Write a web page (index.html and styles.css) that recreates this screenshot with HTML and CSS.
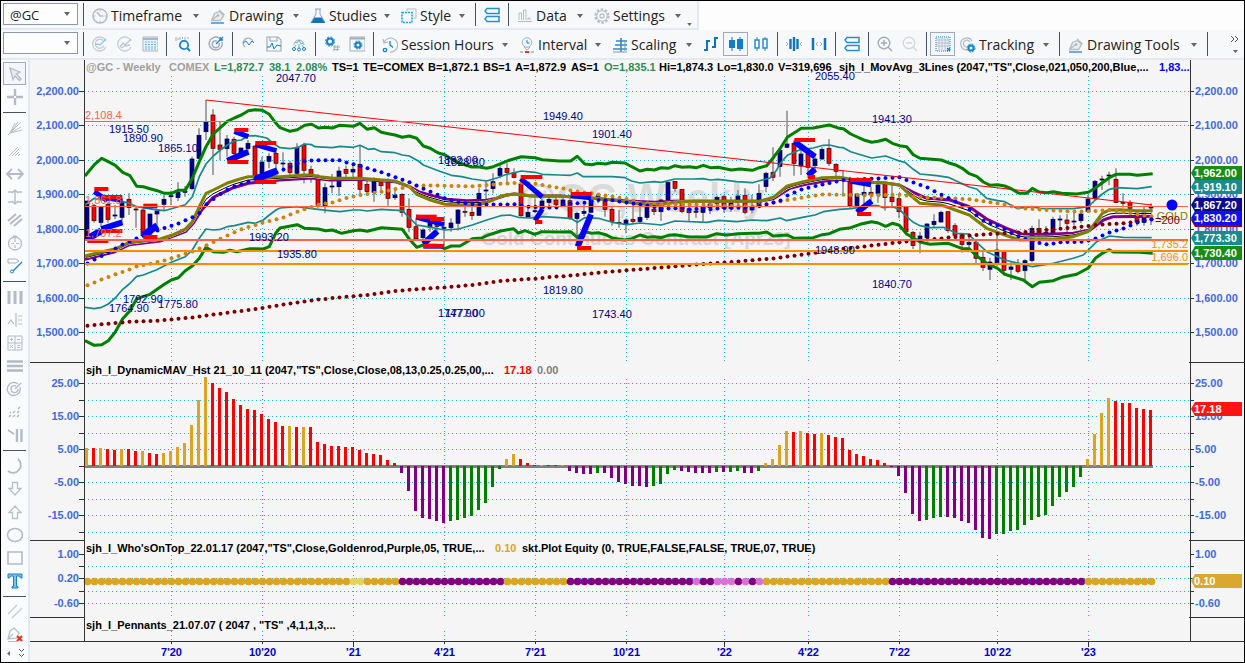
FILE: index.html
```html
<!DOCTYPE html>
<html lang="en">
<head>
<meta charset="utf-8">
<title>@GC - Weekly</title>
<link rel="stylesheet" href="styles.css">
</head>
<body>
<svg class="defs" aria-hidden="true">
  <symbol id="caret" viewBox="0 0 6 4"><path d="M0 0h6L3 4z" fill="#666"/></symbol>
  <symbol id="clock" viewBox="0 0 16 16"><g fill="none" stroke="#b3bcc8"><circle cx="8" cy="8" r="7" stroke-width="1.6"/><path d="M5 4l3 4h3.500" stroke-width="1.500"/><path d="M8 1.500v2M8 12.500v2M1.500 8h2M12.500 8h2"/></g></symbol>
  <symbol id="pen" viewBox="0 0 16 16"><path d="M2 12l2-6 5-2 4 4-2 4z" fill="#e9edf0"/><path d="M1.500 12.500l3-7 5-2 4 4-3 5zM2 12l5-4M9 2l5.500 5" fill="none" stroke="#b3bec6" stroke-width="1.300"/><circle cx="8" cy="7.500" r="1.300" fill="#a9b6bf"/><path d="M1 15h13" stroke="#1c86cf" stroke-width="1.300"/></symbol>
  <symbol id="flask" viewBox="0 0 16 16"><path d="M5 1h6M6 1v5L1 14.500h14L10 6V1" fill="none" stroke="#8ba2b4"/><path d="M4.500 9.500h7l3.500 5.500H1z" fill="#0f74bd"/></symbol>
  <symbol id="style" viewBox="0 0 16 16"><path d="M6 3V1h9v9h-2" fill="none" stroke="#b3bcc8"/><path d="M1 4.500h10v10H1z" fill="none" stroke="#20a3e8" stroke-width="1.600" stroke-dasharray="2 1"/></symbol>
  <symbol id="stack" viewBox="0 0 16 16"><path d="M3 1.500h12v5H3L1 4zM3 9.500h12v5H3L1 12z" fill="#fff" stroke="#2a8ccb" stroke-width="1.500"/></symbol>
  <symbol id="data" viewBox="0 0 16 16"><path d="M2 12V5h2.500v7M6.500 12V2H9v10M11 12v-2h2v2M1 13.500h14" fill="none" stroke="#b3bec6"/></symbol>
  <symbol id="gear" viewBox="0 0 16 16"><circle cx="8" cy="8" r="6.500" fill="none" stroke="#b8c0c8" stroke-width="2.400" stroke-dasharray="2.500 1.580"/><circle cx="8" cy="8" r="5.200" fill="none" stroke="#b8c0c8"/><circle cx="8" cy="8" r="2" fill="none" stroke="#b8c0c8" stroke-width="1.300"/></symbol>
  <symbol id="scan1" viewBox="0 0 16 16"><path d="M14 5a7 7 0 1 0 0 6M11 4.500a4.500 4.500 0 1 0 1 5" fill="none" stroke="#c5cdd8" stroke-width="1.300"/><path d="M3 9l3-1 2 1 6-6" fill="none" stroke="#8fc4e6" stroke-width="1.300"/></symbol>
  <symbol id="scan2" viewBox="0 0 16 16"><path d="M14 5a7 7 0 1 0 0 6" fill="none" stroke="#c5cdd8" stroke-width="1.300"/><path d="M3 11l3-4 2 2 6-6M4 12l4-2 5-1" fill="none" stroke="#b8c5d0" stroke-width="1.300"/></symbol>
  <symbol id="table" viewBox="0 0 16 16"><path d="M1 1h15v14H1z" fill="#e8f2fa" stroke="#aab6c6"/><path d="M1 3h15" stroke="#aab6c6" stroke-width="2"/><path d="M3 6h11M3 8.500h11M3 11h11M3 13h11" stroke="#69b0e0" stroke-dasharray="2 1"/></symbol>
  <symbol id="find" viewBox="0 0 16 16"><path d="M1 1v4M3 2v2M5 1v3M7.500 1v2M10 1v3M13 1v2" stroke="#a3aebb"/><circle cx="9" cy="9" r="4.200" fill="none" stroke="#1583c9" stroke-width="1.700"/><path d="M12 12l3 3" stroke="#1583c9" stroke-width="2"/></symbol>
  <symbol id="target" viewBox="0 0 16 16"><path d="M14 6a6.500 6.500 0 1 1-3-4M11 7a3.500 3.500 0 1 1-2-2" fill="none" stroke="#a3adb9" stroke-width="1.500"/><path d="M8 8l7-7M12 1v3h3" fill="none" stroke="#1583c9" stroke-width="1.300"/></symbol>
  <symbol id="pulse" viewBox="0 0 16 16"><path d="M4 11a5 5 0 1 1 8-5" fill="none" stroke="#a3adb9" stroke-width="1.300"/><path d="M2 7l3-2 3 4 3-4 2 2" fill="none" stroke="#1583c9"/></symbol>
  <symbol id="pulseDisk" viewBox="0 0 16 16"><path d="M1 15V1h11l3 3v11zM4 1v4h7V1" fill="none" stroke="#a3adb9" stroke-width="1.200"/><path d="M1 11h3l2-4 2 6 3-4 4 1" fill="none" stroke="#1583c9"/></symbol>
  <symbol id="pulseNet" viewBox="0 0 16 16"><path d="M3 9a5 5 0 1 1 10 0" fill="none" stroke="#a3adb9"/><path d="M4 6l2 1 2-3 2 4 2-1M8 8v4M5 9l-2 3M11 9l2 3" fill="none" stroke="#5baedd"/><g fill="none" stroke="#1583c9"><circle cx="3" cy="13" r="1.500"/><circle cx="8" cy="13.500" r="1.500"/><circle cx="13" cy="13" r="1.500"/></g></symbol>
  <symbol id="gearHash" viewBox="0 0 16 16"><circle cx="6" cy="5.500" r="3" fill="none" stroke="#1583c9" stroke-width="2"/><circle cx="6" cy="5.500" r="4.600" fill="none" stroke="#1583c9" stroke-dasharray="2 1.600"/><path d="M11 9l-1 6M14 9l-1 6M9 11h7M9 13.500h6" stroke="#a3adb9"/></symbol>
  <symbol id="gearWin" viewBox="0 0 16 16"><path d="M1 1h15v14H1z" fill="none" stroke="#a3adb9"/><path d="M1 2.500h15" stroke="#a3adb9" stroke-width="2"/><circle cx="9" cy="9" r="2.500" fill="none" stroke="#1583c9" stroke-width="2"/><circle cx="9" cy="9" r="4" fill="none" stroke="#1583c9" stroke-dasharray="2 1.140"/></symbol>
  <symbol id="session" viewBox="0 0 16 16"><path d="M2 6a7 7 0 1 1 6 9M1 2l1 4 4-1" fill="none" stroke="#b0b9c4" stroke-width="1.200"/><path d="M8 4v4l3 2.500" fill="none" stroke="#1583c9" stroke-width="1.300"/><circle cx="3" cy="13" r="1.700" fill="none" stroke="#1583c9" stroke-width="1.300"/></symbol>
  <symbol id="interval" viewBox="0 0 16 16"><circle cx="8" cy="5.500" r="4.800" fill="#eef6fb" stroke="#a3b0ba"/><path d="M8 3v3h2.500" fill="none" stroke="#1583c9"/><path d="M5 10l3 3 3-3" fill="none" stroke="#a3b0ba"/><path d="M1 15h3M12 15h3" stroke="#a3b0ba" stroke-width="1.500"/><path d="M6 15h4" stroke="#ee3322" stroke-width="2"/></symbol>
  <symbol id="scaling" viewBox="0 0 16 16"><path d="M9 1v14" stroke="#5d7384" stroke-width="1.500"/><path d="M4 4h11M3 8h12M1 12h14" stroke="#2a8ccb" stroke-width="1.300"/><path d="M13 3v11M1 15h14" stroke="#8796a3"/></symbol>
  <symbol id="ohlc" viewBox="0 0 16 16"><path d="M4 4v11M1 14h3M4 5h3M12 1v11M9 11h3M12 2h3" stroke="#0f74bd" stroke-width="2"/></symbol>
  <symbol id="candles" viewBox="0 0 16 16"><path d="M4 1v14M12 1v14" stroke="#0f74bd"/><path d="M1 4h6v8H1zM9 3h6v10H9z" fill="#0f7ccb"/></symbol>
  <symbol id="hollow" viewBox="0 0 16 16"><path d="M4 1v14M12 1v14" stroke="#2a8ccb"/><path d="M2 4h4v8H2zM10 3h4v9h-4z" fill="#fff" stroke="#2a8ccb" stroke-width="1.500"/></symbol>
  <symbol id="narrow" viewBox="0 0 16 16"><path d="M4.500 3v10M8 1v14M11.500 3v10" stroke="#0f74bd" stroke-width="2.400"/><path d="M0 6l2 2-2 2M16 6l-2 2 2 2" fill="none" stroke="#a3adb9"/></symbol>
  <symbol id="widen" viewBox="0 0 16 16"><path d="M2 2v12M14 2v12" stroke="#0f74bd" stroke-width="2.500"/><path d="M7 6L5 8l2 2M9 6l2 2-2 2" fill="none" stroke="#a3adb9"/></symbol>
  <symbol id="zoomIn" viewBox="0 0 16 16"><circle cx="7" cy="7" r="5.800" fill="none" stroke="#a3adb9" stroke-width="1.400"/><path d="M11 11l4 4M7 4v6M4 7h6" stroke="#a3adb9" stroke-width="1.500"/></symbol>
  <symbol id="zoomOut" viewBox="0 0 16 16"><circle cx="7" cy="7" r="5.800" fill="none" stroke="#d3d8de" stroke-width="1.400"/><path d="M11 11l4 4M4 7h6" stroke="#d3d8de" stroke-width="1.500"/></symbol>
  <symbol id="grid" viewBox="0 0 16 16"><path d="M1 1h14v14H1z" fill="#eef3f7" stroke="#1583c9" stroke-dasharray="1 1"/><path d="M4 1v14M7 1v14M10 1v14M1 4h14M1 7h14M1 10h14M13 1v10" stroke="#b8c2cc"/><path d="M12 12l3 3M15 12l-3 3" stroke="#1583c9" stroke-width="1.300"/></symbol>
  <symbol id="tracking" viewBox="0 0 16 16"><path d="M12 4a6 6 0 1 0-5 9M10 5a3.500 3.500 0 1 0-4 5" fill="none" stroke="#b0b9c4" stroke-width="1.200"/><circle cx="11" cy="11" r="2.500" fill="none" stroke="#1583c9" stroke-width="2"/><circle cx="11" cy="11" r="4" fill="none" stroke="#1583c9" stroke-dasharray="2 1.140"/></symbol>
</svg>

<header class="toolbars">
  <div class="bar bar-top">
    <span class="combo"><select aria-label="Symbol"><option>@GC</option></select><svg class="caret"><use href="#caret"/></svg></span>
    <i class="sep"></i>
    <button class="menu w118"><svg class="ico"><use href="#clock"/></svg>Timeframe<svg class="caret"><use href="#caret"/></svg></button>
    <button class="menu w100"><svg class="ico"><use href="#pen"/></svg>Drawing<svg class="caret"><use href="#caret"/></svg></button>
    <button class="menu w91"><svg class="ico"><use href="#flask"/></svg>Studies<svg class="caret"><use href="#caret"/></svg></button>
    <button class="menu w75"><svg class="ico"><use href="#style"/></svg>Style<svg class="caret"><use href="#caret"/></svg></button>
    <i class="sep"></i>
    <button class="tool" aria-label="Windows"><svg class="ico"><use href="#stack"/></svg></button>
    <i class="sep"></i>
    <button class="menu w77"><svg class="ico"><use href="#data"/></svg>Data<svg class="caret"><use href="#caret"/></svg></button>
    <button class="menu w98"><svg class="ico"><use href="#gear"/></svg>Settings<svg class="caret"><use href="#caret"/></svg></button>
    <button class="more" aria-label="More"><svg class="caret small"><use href="#caret"/></svg></button>
  </div>
  <div class="bar">
    <span class="combo"><select aria-label="Account"><option></option></select><svg class="caret"><use href="#caret"/></svg></span>
    <i class="sep"></i>
    <button class="tool" aria-label="Scanner"><svg class="ico"><use href="#scan1"/></svg></button>
    <button class="tool" aria-label="Hot list"><svg class="ico"><use href="#scan2"/></svg></button>
    <button class="tool" aria-label="Table"><svg class="ico"><use href="#table"/></svg></button>
    <i class="sep"></i>
    <button class="tool" aria-label="Find"><svg class="ico"><use href="#find"/></svg></button>
    <i class="sep"></i>
    <button class="tool" aria-label="Target"><svg class="ico"><use href="#target"/></svg></button>
    <i class="sep"></i>
    <button class="tool" aria-label="Analysis"><svg class="ico"><use href="#pulse"/></svg></button>
    <button class="tool" aria-label="Save analysis"><svg class="ico"><use href="#pulseDisk"/></svg></button>
    <button class="tool" aria-label="Share analysis"><svg class="ico"><use href="#pulseNet"/></svg></button>
    <i class="sep"></i>
    <button class="tool" aria-label="Format"><svg class="ico"><use href="#gearHash"/></svg></button>
    <button class="tool" aria-label="Window format"><svg class="ico"><use href="#gearWin"/></svg></button>
    <i class="sep"></i>
    <button class="menu w137"><svg class="ico"><use href="#session"/></svg>Session Hours<svg class="caret"><use href="#caret"/></svg></button>
    <button class="menu w93"><svg class="ico"><use href="#interval"/></svg>Interval<svg class="caret"><use href="#caret"/></svg></button>
    <button class="menu w91"><svg class="ico"><use href="#scaling"/></svg>Scaling<svg class="caret"><use href="#caret"/></svg></button>
    <button class="tool" aria-label="OHLC bars"><svg class="ico"><use href="#ohlc"/></svg></button>
    <button class="tool on" aria-label="Candlesticks"><svg class="ico"><use href="#candles"/></svg></button>
    <button class="tool" aria-label="Hollow candles"><svg class="ico"><use href="#hollow"/></svg></button>
    <i class="sep"></i>
    <button class="tool" aria-label="Decrease spacing"><svg class="ico"><use href="#narrow"/></svg></button>
    <button class="tool" aria-label="Increase spacing"><svg class="ico"><use href="#widen"/></svg></button>
    <i class="sep"></i>
    <button class="tool" aria-label="Windows"><svg class="ico"><use href="#stack"/></svg></button>
    <i class="sep"></i>
    <button class="tool" aria-label="Zoom in"><svg class="ico"><use href="#zoomIn"/></svg></button>
    <button class="tool" aria-label="Zoom out"><svg class="ico"><use href="#zoomOut"/></svg></button>
    <i class="sep"></i>
    <button class="tool on" aria-label="Grid"><svg class="ico"><use href="#grid"/></svg></button>
    <button class="menu w100"><svg class="ico"><use href="#tracking"/></svg>Tracking<svg class="caret"><use href="#caret"/></svg></button>
    <i class="sep"></i>
    <button class="menu w140"><svg class="ico"><use href="#pen"/></svg>Drawing Tools<svg class="caret"><use href="#caret"/></svg></button>
    <i class="sep"></i>
    <button class="overflow" aria-label="More tools"><svg viewBox="0 0 10 22"><path d="M1 3l3 3-3 3M5 3l3 3-3 3" fill="none" stroke="#555"/><path d="M3 17h5l-2.500 3z" fill="#666"/></svg></button>
  </div>
</header>

<main class="work">
  <nav class="side">
    <button class="on" aria-label="Pointer"><svg class="ico"><path d="M3 2l10 4-3.500 2L14 13l-1.500 1.500L8 10l-2 3.500z" fill="#e8ebf0" stroke="#b4bbc6" stroke-width="1.300"/></svg></button>
    <button aria-label="Crosshair"><svg class="ico"><path d="M8 0v7M8 9v7M0 8h7M9 8h7" stroke="#b4bbc6" stroke-width="2.400"/></svg></button>
    <i class="rule"></i>
    <button aria-label="Fan lines"><svg class="ico"><path d="M1 15L14 2M3 13L8 3M3 13l11-6M3 13L11 2M3 13l12-3" fill="none" stroke="#b4c1c8"/></svg></button>
    <button aria-label="Speed lines"><svg class="ico"><path d="M2 13l9-9M5 13l7-7M8 13l4-4M11 13l2-2" stroke="#b4bbc6"/></svg></button>
    <button aria-label="Horizontal line"><svg class="ico"><path d="M1 8h14M5 3L0 8l5 5M11 3l5 5-5 5" fill="none" stroke="#b4bbc6" stroke-width="1.800"/></svg></button>
    <button aria-label="Vertical line"><svg class="ico"><path d="M8 1v14M5 4l3-3 3 3M5 12l3 3 3-3M1 3h5M10 3h5M1 13h5M10 13h5" fill="none" stroke="#b4c1c8" stroke-width="1.500"/></svg></button>
    <button aria-label="Parallel lines"><svg class="ico"><path d="M1 9l8-7M3 12L14 3M7 14l8-7" stroke="#b4bbc6" stroke-width="2"/></svg></button>
    <button aria-label="Cycle"><svg class="ico"><circle cx="8" cy="8.500" r="6.500" fill="none" stroke="#b4bbc6" stroke-width="1.300"/><path d="M8 1v6M4 8.500h3M9 8.500h3M8 10v3M6 1h4" stroke="#b4bbc6" stroke-width="1.200"/></svg></button>
    <button aria-label="Trend line"><svg class="ico"><path d="M1 1h8l3 2-3 2H1z" fill="none" stroke="#a3b0ba"/><path d="M15 4L6 13" stroke="#1583c9" stroke-width="1.300"/><circle cx="5" cy="13.500" r="1.500" fill="none" stroke="#1583c9"/></svg></button>
    <i class="rule"></i>
    <button aria-label="Time lines"><svg class="ico"><path d="M2 2v13M8 2v13M14 2v13" stroke="#b4bbc6" stroke-width="3"/></svg></button>
    <button aria-label="Retracement"><svg class="ico"><path d="M9 1v14M1 12l3-4 3 4M11 4h4M11 8h4M11 12h4" fill="none" stroke="#b4bec6" stroke-width="1.200"/></svg></button>
    <button aria-label="Calculator"><svg class="ico"><path d="M1 1h14v14H1zM8 1v14M1 8h14M3 4.500h3M4.500 3v3M10 4.500h3M3 10l3 3M6 10l-3 3M10 10.500h3M10 12.500h3" fill="none" stroke="#b4bbc6"/></svg></button>
    <button aria-label="Price lines"><svg class="ico"><path d="M0 3.500h16M0 8h16M0 12.500h16" stroke="#b4b9c2" stroke-width="2.600"/></svg></button>
    <button aria-label="Arcs"><svg class="ico"><path d="M13 6a6.500 6.500 0 1 1-2-3M11 8a3.500 3.500 0 1 1-2-3M8 8l6-6" fill="none" stroke="#b4bbc6" stroke-width="1.400"/></svg></button>
    <button aria-label="Scatter"><svg class="ico"><path d="M2 13l2-2M6 13l2-2M10 13l2-2M6 9l2-2M10 9l2-2M11 5l2-2M3 9l1-1" stroke="#b4bbc6" stroke-width="1.500"/></svg></button>
    <button aria-label="Extension"><svg class="ico"><path d="M10 2v13M14.500 2v13" stroke="#b4bbc6" stroke-width="2.400"/><path d="M1 3l6 4" stroke="#b4bbc6" stroke-width="1.600"/></svg></button>
    <i class="rule"></i>
    <button aria-label="Arc"><svg class="ico"><path d="M11 1a7 7 0 1 1-10 12" fill="none" stroke="#b4bbc6" stroke-width="1.800"/></svg></button>
    <button aria-label="Arrow down"><svg class="ico"><path d="M5.500 1.500h5v6H14L8 14 2 7.500h3.500z" fill="none" stroke="#b4c1c8" stroke-width="1.300"/></svg></button>
    <button aria-label="Arrow up"><svg class="ico"><path d="M5.500 14.500h5v-6H14L8 2 2 8.500h3.500z" fill="none" stroke="#b4c1c8" stroke-width="1.300"/></svg></button>
    <button aria-label="Ellipse"><svg class="ico"><ellipse cx="8" cy="8" rx="7.500" ry="6.500" fill="none" stroke="#b4bbc6" stroke-width="1.600"/></svg></button>
    <button aria-label="Rectangle"><svg class="ico"><path d="M1 2h14v12H1z" fill="none" stroke="#b4bbc6" stroke-width="1.600"/></svg></button>
    <button aria-label="Text"><svg class="ico"><path d="M1 1h14v4h-1.500l-1-2H9.500v10.500H11V15H5v-1.500h1.500V3H3.500l-1 2H1z" fill="#7cc2ec" stroke="#1583c9"/></svg></button>
    <i class="rule"></i>
    <button aria-label="Channel"><svg class="ico"><path d="M1 10l9-9M5 14L15 4" stroke="#c3ccd3" stroke-width="1.300"/></svg></button>
    <button aria-label="Delete drawings"><svg class="ico"><path d="M1 12l2-8 4-3 5 5-2 5zM1 12l5-5M1 14.500h9" fill="none" stroke="#b4bec6" stroke-width="1.200"/><path d="M10 9l5 5M15 9l-5 5" stroke="#ee2c1c" stroke-width="2"/></svg></button>
    <button class="foot" aria-label="Scroll tools"><svg class="ico"><path d="M3 6v5L0 8.500z" fill="#666"/><path d="M12 4l2.500 2.500L17 4M12 9l2.500 2.500L17 9" fill="none" stroke="#555"/></svg></button>
  </nav>
  <svg id="chart" class="chart" viewBox="30 60 1214 602" preserveAspectRatio="xMinYMin meet" role="img" aria-label="Weekly gold futures chart"></svg>
</main>
<script src="chart.js"></script>
</body>
</html>
```

FILE: styles.css
```css
* { box-sizing: border-box; }

body {
  margin: 0;
  min-height: 100vh;
  display: flex;
  flex-direction: column;
  border: 1px solid #000;
  background: #f5f5f5;
  color: #222;
  font: 14px/20px "Open Sans", "Noto Sans", sans-serif;
}

.defs { display: none; }

button {
  border: 0;
  padding: 0;
  background: none;
  color: inherit;
  font: inherit;
  flex: none;
}

.toolbars { background: #fdfdfe; }

.bar {
  display: flex;
  align-items: stretch;
  height: 30px;
  padding: 2px 0 2px 2px;
  background: #f7f8fa;
  border-bottom: 2px solid #e3e9f2;
}

.bar-top {
  width: max-content;
  height: 29px;
  border-right: 2px solid #e3e9f2;
}

.combo {
  display: grid;
  flex: none;
  width: 75px;
  height: 22px;
  margin-right: 1px;
  align-items: center;
}

.combo select {
  grid-area: 1 / 1;
  width: 100%;
  height: 22px;
  padding: 2px 6px 0;
  appearance: none;
  border: 1px solid #8e98ac;
  border-radius: 0;
  background: #fdfdfe;
  color: #222;
  font: 13px/18px "Open Sans", sans-serif;
}

.combo .caret {
  grid-area: 1 / 1;
  justify-self: end;
  margin-right: 8px;
}

.sep {
  flex: none;
  width: 8px;
  background: linear-gradient(#4a5260, #4a5260) center / 1px 100% no-repeat;
}

.ico { width: 16px; height: 16px; flex: none; overflow: visible; }
.caret { width: 6px; height: 4px; flex: none; }
.small { width: 5px; height: 3px; }

.menu {
  display: flex;
  align-items: center;
  gap: 3px;
  padding: 2px 6px 0 5px;
  white-space: nowrap;
}

.menu .caret { margin-left: auto; }

.w75 { width: 75px; }
.w77 { width: 77px; }
.w91 { width: 91px; }
.w93 { width: 93px; }
.w98 { width: 98px; }
.w100 { width: 100px; }
.w118 { width: 118px; }
.w137 { width: 137px; }
.w140 { width: 140px; }

.tool {
  display: flex;
  align-items: center;
  justify-content: center;
  width: 25px;
}

.on { border: 1px solid #9faabc; background: #f4f6f9; }

.more {
  display: flex;
  align-items: flex-end;
  width: 10px;
}

.overflow { width: 12px; margin-left: auto; margin-right: 2px; }
.overflow svg { display: block; width: 10px; height: 22px; }

.work {
  flex: 1;
  display: flex;
  align-items: stretch;
}

.side {
  flex: none;
  width: 29px;
  padding: 2px 2px 0;
  display: flex;
  flex-direction: column;
  background: #fafbfc;
  border-right: 2px solid #e0e8f3;
}

.side button {
  display: flex;
  align-items: center;
  justify-content: center;
  height: 23px;
}

.side .foot { height: 14px; }

.rule {
  height: 8px;
  background: linear-gradient(#4a5260, #4a5260) center / 100% 1px no-repeat;
}

.chart {
  display: block;
  flex: 1;
  min-width: 0;
  height: auto;
  align-self: flex-start;
  background: #f5f5f5;
  font: 11px "Liberation Sans", Arial, sans-serif;
}

.chart .bold { font-weight: bold; }
.chart .mark { font-weight: bold; font-size: 40px; }
.chart .submark { font-weight: bold; font-size: 19px; }
.chart .dots { stroke: #18b4e6; stroke-dasharray: 1 3; }
.chart .axis { stroke: #333; }
```

FILE: chart.js
```js
const NS = "http://www.w3.org/2000/svg";
const chart = document.getElementById("chart");

function add(name, attrs, text) {
  const el = document.createElementNS(NS, name);
  for (const k in attrs) el.setAttribute(k, attrs[k]);
  if (text !== undefined) el.textContent = text;
  chart.appendChild(el);
  return el;
}
const label = (x, y, s, fill, cls = "", anchor = "start") =>
  add("text", { x, y, fill, class: cls, "text-anchor": anchor }, s);
const line = (x1, y1, x2, y2, a) => add("line", { x1, y1, x2, y2, ...a });

// Studies are stored at three units per pixel, in four horizontal blocks of 840 units.
const px = v => v / 3;
const py = v => 60 + v / 3;
const barX = i => 87 + 7 * i;
function series(...blocks) {
  const out = [];
  blocks.forEach((b, n) => {
    for (let k = 0; k < b.length; k += 2) out.push([px(b[k] + 840 * n), py(b[k + 1])]);
  });
  return out;
}
function at(s, x) {
  for (let k = 1; k < s.length; k++) {
    if (x <= s[k][0]) {
      const [a, b] = [s[k - 1], s[k]];
      return a[1] + (b[1] - a[1]) * (x - a[0]) / (b[0] - a[0]);
    }
  }
  return s[s.length - 1][1];
}
const poly = (s, stroke, w) => add("polyline", {
  points: s.map(p => p[0].toFixed(1) + "," + p[1].toFixed(1)).join(" "),
  fill: "none", stroke, "stroke-width": w, "stroke-linejoin": "round"
});
function dots(s, fill) {
  for (let i = 0; i < 153; i++) add("circle", { cx: barX(i) + 0.5, cy: at(s, barX(i)).toFixed(1), r: 2, fill });
}

/* Watermark */
label(641, 212, "@GC,Weekly", "#dadada", "mark", "middle");
label(636, 245, "Gold Continuous Contract [Apr23]", "#d6d6d6", "submark", "middle");

/* Grid */
const months = [[171.5, "7'20"], [262.5, "10'20"], [353.5, "'21"], [444.5, "4'21"], [535.5, "7'21"], [626.5, "10'21"], [724.5, "'22"], [808.5, "4'22"], [899.5, "7'22"], [997.5, "10'22"], [1088.5, "'23"]];
for (const [x, s] of months) {
  for (const [a, b] of [[76, 361], [379, 540], [555, 616], [631, 641]]) line(x, a, x, b, { class: "dots" });
  line(x, 641, x, s[0] === "'" ? 647 : 644, { class: "axis" });
  label(x, 656, s, "#0000cd", "bold", "middle");
}
const prices = [[91.5, "2,200.00"], [125.5, "2,100.00"], [160.5, "2,000.00"], [194.5, "1,900.00"], [229.5, "1,800.00"], [263.5, "1,700.00"], [298.5, "1,600.00"], [332.5, "1,500.00"]];
const hist = [[383.5, "25.00"], [400.5, ""], [416.5, "15.00"], [433.5, ""], [449.5, "5.00"], [466.5, ""], [482.5, "-5.00"], [499.5, ""], [515.5, "-15.00"], [532.5, ""]];
const tops = [[554.5, "1.00"], [566.5, ""], [578.5, "0.20"], [591.5, ""], [603.5, "-0.60"]];
for (const [y, s] of [...prices, ...hist, ...tops]) {
  if (s !== "1.00") line(88, y, 1190, y, { class: "dots" });
  line(79, y, 84, y, { class: "axis" });
  line(1191, y, 1194, y, { class: "axis" });
  if (s) {
    label(79, y + 3.5, s, "#4169e1", "bold", "end");
    if (s !== "0.20") label(1195, y + 3.5, s, "#4169e1", "bold");
  }
}

/* Candles: high, body top, body bottom, low, up (1) or down (0) */
const candles = [
  [423,423,537,537,1],[432,437,482,488,0],[440,440,487,500,1],[425,433,479,488,0],[435,465,467,478,1],[415,425,472,490,1],[400,418,443,465,0],[440,447,449,503,0],[445,450,527,533,0],[462,462,516,516,1],
  [448,453,462,515,1],[405,418,433,452,1],[392,407,409,435,1],[367,397,413,423,1],[378,394,396,410,1],[290,297,386,390,1],[205,226,295,297,1],[120,185,215,240,1],[148,165,265,345,0],[185,255,268,300,0],
  [225,237,266,290,1],[230,238,281,290,0],[264,264,290,290,1],[240,250,266,275,1],[258,258,360,360,0],[290,306,345,360,1],[280,289,304,325,1],[265,280,310,330,0],[277,309,311,335,1],[303,310,338,345,0],
  [250,262,340,345,1],[248,255,331,370,0],[317,328,342,368,0],[342,348,436,445,0],[370,383,437,460,1],[342,378,380,400,1],[320,333,380,408,1],[317,328,340,355,0],[310,328,336,350,1],[258,313,388,403,0],
  [360,373,395,405,0],[352,362,397,425,1],[360,366,377,390,0],[355,367,415,437,0],[385,405,413,420,1],[400,403,457,470,0],[415,448,502,517,0],[480,500,536,540,0],[505,510,533,545,1],[485,490,502,515,1],
  [485,490,500,515,0],[470,502,504,565,1],[475,489,503,515,1],[448,450,490,512,1],[420,454,456,470,0],[440,457,467,480,0],[385,400,466,468,1],[360,390,392,430,1],[340,365,386,400,1],[310,325,347,355,1],
  [310,325,338,368,0],[325,338,352,355,0],[365,372,467,470,0],[445,457,471,473,1],[415,452,454,460,1],[415,423,445,460,1],[410,418,428,440,1],[410,420,434,440,0],[410,420,437,440,1],[415,422,476,480,0],
  [455,460,476,555,1],[435,454,460,468,1],[415,418,457,460,1],[400,407,409,430,0],[410,418,448,470,0],[440,448,484,497,0],[450,487,489,503,0],[475,480,492,520,1],[430,478,485,493,0],[440,472,485,490,1],
  [432,440,472,480,1],[435,448,455,465,0],[418,420,455,482,1],[365,367,420,425,1],[363,364,385,395,0],[387,388,455,460,0],[430,446,458,485,0],[430,454,456,473,0],[430,440,457,485,1],[425,432,443,462,1],
  [407,412,430,440,1],[405,410,445,458,0],[410,425,445,455,1],[390,408,428,438,1],[385,406,457,463,0],[405,440,450,460,1],[373,400,440,445,1],[335,340,380,397,1],[262,337,352,363,0],[265,271,320,350,1],
  [152,252,262,265,1],[240,250,310,347,0],[270,282,318,345,1],[275,283,322,355,0],[285,297,317,330,1],[262,268,297,300,1],[237,265,310,318,0],[310,313,334,360,0],[330,354,356,403,1],[350,365,437,445,0],
  [400,402,437,440,1],[372,397,405,440,1],[380,397,403,430,0],[360,375,400,428,1],[370,373,413,452,0],[378,411,425,445,0],[405,416,455,475,0],[438,440,515,520,0],[513,517,557,567,0],[515,528,540,580,1],
  [490,492,533,540,1],[463,484,494,505,1],[452,457,486,488,1],[453,455,512,518,0],[490,497,526,535,0],[520,524,553,578,0],[520,547,554,577,1],[545,547,595,615,0],[575,592,622,633,0],[593,606,628,660,1],
  [520,570,608,618,1],[570,573,631,645,0],[605,621,628,660,1],[597,613,634,640,0],[598,602,632,660,1],[497,505,602,607,1],[478,505,520,540,0],[498,517,519,540,1],[470,478,520,525,1],[466,477,479,500,1],
  [462,480,490,520,0],[450,483,485,495,1],[450,462,482,490,1],[405,417,455,458,1],[360,364,415,420,1],[347,357,359,390,1],[335,345,347,375,1],[325,358,428,430,0],[400,427,429,443,0],[420,427,445,465,0],
  [455,458,486,497,0],[440,457,487,497,1],[430,441,443,495,1]
];
candles.forEach(([h, t, b, l, up], i) => {
  const x = barX(i);
  line(x, py(h), x, py(l), { stroke: "#888", "stroke-width": 1.5 });
  add("rect", { x: x - 2, y: py(t).toFixed(1), width: 4, height: Math.max(1, (b - t) / 3).toFixed(1), fill: up ? "#00008b" : "#f00", stroke: up ? "#00004b" : "#300", "stroke-width": 0.7 });
});

/* Bands and averages */
const upper = series(
  [255,348,283,314,305,295,325,305,346,316,368,337,390,347,410,379,430,380,450,386,472,392,493,400,514,400,535,391,556,391,577,355,598,305,618,260,640,222,661,203,682,184,703,174,724,165,745,152,766,149,787,151,808,163,828,190],
  [0,203,30,214,52,209,74,196,95,193,115,204,137,202,157,204,178,196,200,197,220,199,240,190,262,208,283,203,304,217,325,221,345,225,367,232,388,228,410,235,430,258,451,265,473,278,494,284,514,296,540,310,575,321,598,321,620,325,640,320,662,311,690,300,724,290,765,293,787,299,838,303],
  [0,303,32,303,52,289,74,312,95,314,115,310,137,312,157,307,195,309,215,320,240,333,262,328,283,330,304,323,325,325,345,317,367,322,388,320,410,323,430,316,451,323,475,322,514,330,540,327,577,331,598,323,620,317,640,293,661,265,682,232,703,218,724,205,760,204,787,199,808,195,838,205],
  [10,206,32,222,74,241,95,247,115,244,137,238,157,250,178,257,200,260,220,284,240,295,304,300,325,308,345,314,367,325,388,341,410,349,430,366,451,376,473,374,494,378,515,387,537,400,560,400,577,385,598,396,620,398,640,395,665,400,710,402,745,397,766,384,787,368,808,353,828,343,870,343,892,346,938,341]);
const lower = series(
  [255,842,283,856,305,854,325,842,346,816,368,776,390,752,410,716,450,703,493,673,514,660,535,653,556,632,577,618,598,595,618,562,640,575,670,577,690,571,710,575,750,566,790,567,808,560,828,518],
  [0,504,52,494,74,505,115,507,137,512,157,510,185,520,220,512,240,510,262,514,304,503,367,508,388,537,410,562,430,555,475,556,494,566,514,558,540,558,577,536,605,534,620,527,662,513,700,506,715,519,735,512,765,523,785,515,838,516],
  [0,516,32,515,52,532,74,515,95,520,115,518,137,524,157,534,195,540,215,536,240,525,262,532,283,530,304,533,325,526,345,524,388,531,440,531,470,521,500,525,535,521,577,520,598,520,620,516,640,528,682,525,703,535,760,533,787,524,808,521,838,508],
  [32,503,60,493,95,485,115,489,137,499,157,490,178,496,200,522,240,546,270,553,325,550,367,566,388,566,410,588,440,610,473,625,494,643,550,660,577,680,598,667,640,662,665,652,710,643,745,624,766,595,787,580,808,569,820,576,900,577,938,580]);
const tealUp = series(
  [255,435,283,415,305,420,345,415,368,425,388,430,410,440,430,443,460,448,493,452,535,440,556,434,577,410,598,350,618,312,640,288,661,270,682,255,703,243,724,240,745,228,766,227,800,234,828,256],
  [0,263,30,266,52,263,74,252,95,254,105,260,157,263,180,259,220,262,240,256,265,268,283,266,304,275,345,278,367,285,388,288,415,303,430,315,475,332,514,346,545,350,577,357,620,363,650,354,680,343,724,333,765,337,787,343,838,345],
  [32,346,52,339,70,350,157,350,195,353,215,363,240,369,283,365,304,367,345,357,400,357,430,356,451,360,475,358,530,365,577,368,598,362,630,354,650,330,661,310,682,286,720,269,760,264,790,256,808,255,838,262],
  [10,263,32,275,74,288,95,294,137,288,178,303,195,307,220,328,240,342,290,347,325,352,367,371,388,381,410,387,440,415,473,422,494,425,530,445,577,440,600,445,700,446,745,440,766,420,787,402,808,388,830,383,892,386,935,380]);
const tealLow = series(
  [255,742,283,746,305,742,325,732,346,714,368,688,388,672,410,649,430,645,470,629,514,607,556,590,577,570,598,535,618,507,640,510,661,508,682,500,703,497,745,487,766,490,790,480,808,465,828,450],
  [0,444,50,440,95,446,140,451,180,455,220,450,240,450,262,453,304,448,367,452,388,473,410,495,440,500,494,510,535,507,577,495,620,480,662,467,690,465,715,472,750,474,790,470,838,473],
  [32,475,52,487,74,473,115,475,157,487,200,494,240,489,304,495,345,483,440,487,475,481,530,485,577,480,620,482,661,474,680,482,724,473,765,465,790,455,838,448],
  [32,446,95,437,115,437,130,443,157,440,178,448,200,470,220,487,240,497,270,503,310,502,350,520,385,522,410,547,440,575,473,590,494,600,550,613,577,620,640,610,700,595,730,585,770,545,808,528,850,532,935,533]);
const olive = series(
  [255,588,300,577,345,567,388,547,480,537,520,524,556,507,577,485,598,440,618,400,640,390,680,370,720,357,745,350,838,350],
  [0,350,74,345,95,345,120,350,160,355,240,355,345,363,388,380,410,403,451,420,494,433,540,435,600,434,640,420,662,408,703,402,750,408,838,408],
  [32,410,74,413,115,416,157,420,240,432,300,434,345,427,400,424,598,424,640,412,682,378,730,365,787,353,838,352],
  [30,357,60,366,130,368,178,375,210,405,240,430,304,435,388,465,440,505,494,525,540,540,640,538,700,530,745,515,787,460,808,450,840,449,892,452,938,452]);
const purple = series(
  [255,598,345,575,388,554,480,543,556,515,580,490,605,450,640,412,700,383,745,370,838,360],
  [0,360,95,354,150,360,240,358,345,365,388,380,420,397,460,408,500,418,560,422,620,421,650,415,680,405,703,402,760,408,838,408],
  [100,415,200,423,283,427,345,424,400,424,598,424,640,416,690,385,730,374,800,362,838,358],
  [60,367,130,368,178,375,220,397,260,415,330,420,388,440,440,477,500,505,545,522,620,523,700,520,750,510,790,480,820,470,935,469]);
const middle = [];
for (let i = 0; i < 153; i++) middle.push([barX(i), (at(olive, barX(i)) + at(purple, barX(i))) / 2]);
const blue = series(
  [262,610,283,598,325,577,368,552,410,535,450,519,493,504,535,490,577,471,598,458,618,433,650,408,690,384,745,365,766,357,808,345],
  [10,328,30,320,60,305,95,301,178,301,200,308,220,313,262,325,304,337,345,352,388,367,430,387,473,405,494,416,540,428,600,434,703,433,740,440,830,443],
  [10,433,74,428,115,420,157,421,200,428,240,433,283,441,304,446,367,444,388,449,430,445,451,448,490,444,577,443,620,433,661,421,682,406,724,388,787,373,829,364],
  [10,360,74,357,178,352,220,368,262,383,304,405,345,425,388,450,430,483,473,497,537,530,577,545,620,553,660,547,730,545,766,535,808,517,850,505,892,487,935,477]);
const orange = series(
  [261,676,305,658,345,643,388,628,410,619,450,611,493,601,535,588,577,574,640,546,682,526,724,507,787,488,828,478],
  [10,472,52,455,95,440,115,434,157,427,200,413,240,405,304,395,345,387,400,378,430,376,577,379,662,371,724,368,765,371,829,383],
  [10,386,32,392,95,400,157,410,200,417,240,428,300,433,400,433,500,438,577,439,620,432,682,420,724,413,787,403,829,404],
  [32,405,95,406,178,404,240,412,325,414,388,418,473,430,537,444,600,449,703,455,766,453,808,450,850,456,892,464,935,469]);
const maroon = series(
  [261,797,388,785,472,782,577,772,661,761,766,747,828,737],
  [10,733,95,721,178,712,262,705,345,693,430,686,494,682,577,675,662,663,765,656,829,649],
  [10,649,95,640,157,634,240,628,345,619,451,610,535,604,640,595,703,587,765,578,829,570],
  [10,566,74,559,157,549,200,544,304,535,388,526,473,521,577,515,640,508,724,500,787,493,850,490,935,478]);

poly(tealUp, "#148a8a", 1.7);
poly(tealLow, "#148a8a", 1.7);
poly(upper, "#008000", 3);
poly(lower, "#008000", 3);
poly(purple, "#800080", 3);
poly(middle, "#fff", 2);
poly(middle, "#000", 1);
poly(olive, "#808000", 3);
dots(maroon, "#800000");
dots(orange, "#cc8410");
dots(blue, "#0000ff");

/* Pennants: block, x1, y1, x2, y2, weight */
const strokes = [
  [0,283,395,322,422,5],[0,304,413,367,422,4],[0,262,536,304,512,7],[0,304,507,367,487,6],[0,430,442,472,442,2],[0,430,525,472,497,7],[0,703,214,745,230,5],[0,682,302,745,275,6],[0,766,254,829,272,5],[0,766,357,832,332,7],
  [1,408,471,492,494,5],[1,430,552,472,514,6],[1,430,563,492,563,2],[1,722,356,787,411,5],[1,765,482,787,447,5],
  [2,32,408,93,415,4],[2,53,560,93,463,6],[2,703,245,765,290,6],[2,744,347,765,327,6],
  [3,30,363,93,374,5],[3,51,457,95,423,6]
];
for (const [n, a, b, c, d, w] of strokes) line(px(a + 840 * n), py(b), px(c + 840 * n), py(d), { stroke: "#0000ff", "stroke-width": w });
const caps = [[0,283,325,387],[0,303,367,411],[0,262,325,543],[0,303,367,513],[0,430,472,437],[0,430,472,531],[0,703,745,210],[0,682,745,306],[0,766,829,249],[0,766,829,366],[1,408,470,470],[1,450,492,477],[1,430,492,558],[1,722,787,351],[1,765,787,486],[2,32,95,402],[2,51,93,564],[2,703,765,240],[2,744,765,351],[3,30,93,360],[3,51,93,462]];
for (const [n, a, b, y] of caps) line(px(a + 840 * n), py(y), px(b + 840 * n), py(y), { stroke: "#ff0000", "stroke-width": 4 });

/* Trend and level lines */
line(206, 100, 1152, 205, { stroke: "#ff0000", "stroke-width": 1 });
line(85, 121.5, 1188, 121.5, { stroke: "#ff6347", "stroke-width": 1 });
line(85, 206.5, 1188, 206.5, { stroke: "#ff6347", "stroke-width": 1 });
line(85, 240, 1188, 240, { stroke: "#ff6347", "stroke-width": 2 });
line(85, 251, 1188, 251, { stroke: "#ff8c00", "stroke-width": 2 });
line(85, 264, 1188, 264, { stroke: "#ff8c00", "stroke-width": 2 });
label(85, 119, "2,108.4", "#ff6347");
label(85, 204, "1,861.8", "#ff6347");
label(85, 237, "1,797.2", "#ff6347");
label(1188, 248, "1,735.2", "#ff8c00", "", "end");
label(1188, 261, "1,696.0", "#ff8c00", "", "end");
label(1188, 220, "GOLD", "#808000", "", "end");
label(1155, 224, "=200", "#800000");
add("circle", { cx: 1172, cy: 205, r: 5.5, fill: "#0000ff" });

/* Swing prices */
const swings = [[276,82,"2047.70"],[109,133,"1915.50"],[123,142,"1890.90"],[158,152,"1865.10"],[249,241,"1993.20"],[277,258,"1935.80"],[123,303,"1792.90"],[109,312,"1764.90"],[158,308,"1775.80"],[438,164,"1882.00"],[445,166,"1828.80"],[438,317,"1747.90"],[445,317,"1777.00"],[543,120,"1949.40"],[592,138,"1901.40"],[543,294,"1819.80"],[592,318,"1743.40"],[815,80,"2055.40"],[815,254,"1948.90"],[872,123,"1941.30"],[872,288,"1840.70"]];
for (const [x, y, s] of swings) label(x, y, s, "#00008b");

/* Histogram, value per bar with run lengths of colour codes */
line(85, 466.5, 1153, 466.5, { stroke: "#808080", "stroke-width": 3 });
const colours = { y: "#daa520", r: "#ff0000", p: "#800080", g: "#008000", o: "#da70d6", l: "#e4d35a" };
const heights = [18,18,18,17,16,17,17,15,15,13,12,13,15,19,23,41,66,89,83,78,74,67,61,57,56,52,47,44,40,40,39,39,39,24,22,20,20,19,19,16,13,12,11,6,3,-7,-25,-45,-52,-53,-55,-57,-55,-54,-52,-50,-44,-37,-21,-3,7,12,7,3,1,1,1,1,1,-5,-7,-8,-8,-7,-7,-12,-16,-18,-20,-20,-21,-20,-18,-8,-4,-5,-6,-7,-7,-7,-6,-6,-6,-5,-7,-7,-5,3,7,21,35,34,35,33,32,33,31,29,28,16,12,10,7,6,3,-1,-10,-27,-48,-55,-54,-52,-51,-51,-52,-55,-57,-64,-72,-73,-68,-68,-65,-64,-59,-54,-51,-49,-40,-31,-26,-21,-11,7,32,53,68,65,63,63,58,57,56];
const runs = "1y1r1y2r1y2r1y2r7y11r1y1r1y13r7p8g2y3r1y2r1y4p1g7p4g5p1g1p2g2p1g4y1r1y2r1y9r5p3g7p13g4y6r";
const codes = runs.replace(/(\d+)([a-z])/g, (m, n, c) => c.repeat(+n));
heights.forEach((v, i) => add("rect", { x: barX(i) - 2, y: v > 0 ? 466 - v : 466, width: 3, height: Math.abs(v), fill: colours[codes[i]] }));

/* Who's on top */
const topCodes = "y".repeat(38) + "ll" + "y".repeat(5) + "p".repeat(15) + "y".repeat(9) + "p".repeat(18) + "oppooopopo" + "y".repeat(18) + "p".repeat(28) + "y".repeat(10);
[...topCodes].forEach((c, i) => add("circle", { cx: barX(i) + 0.5, cy: 581.5, r: 3.8, fill: colours[c] }));

/* Pane frames */
line(84.5, 60, 84.5, 641, { class: "axis" });
line(1190.5, 60, 1190.5, 641, { class: "axis" });
line(30, 641.5, 1244, 641.5, { class: "axis" });
for (const y of [362.5, 540.5, 617.5]) {
  line(30, y, 84, y, { class: "axis" });
  line(1189, y, 1244, y, { class: "axis" });
}

/* Value tags on the price axis */
function tag(y, s, fill) {
  add("path", { d: `M1191 ${y}l4-7h47v14h-47z`, fill });
  if (s) label(1194, y + 4, s, "#fff", "bold");
}
tag(220, "", "#a00000");
tag(173, "1,962.00", "#178c17");
tag(187, "1,919.10", "#178c8c");
tag(238, "1,773.30", "#178c8c");
tag(253, "1,730.40", "#178c17");
tag(205, "1,867.20", "#0c0c8c");
tag(218, "1,830.20", "#1010f0");
tag(409, "17.18", "#ff1414");
tag(581, "0.10", "#daa830");

/* Status lines */
const black = "#000", grey = "#a0a0a0", green = "#2e8b57";
const status = [
  [86,71,"@GC - Weekly",grey],[169,71,"COMEX",grey],[214,71,"L=1,872.7",green],[269,71,"38.1",green],[296,71,"2.08%",green],[332,71,"TS=1",black],[363,71,"TE=COMEX",black],[428,71,"B=1,872.1",black],[483,71,"BS=1",black],[515,71,"A=1,872.9",black],[571,71,"AS=1",black],[604,71,"O=1,835.1",green],[659,71,"Hi=1,874.3",black],[717,71,"Lo=1,830.0",black],[778,71,"V=319,696",black],
  [839,71,"sjh_I_MovAvg_3Lines (2047,\"TS\",Close,021,050,200,Blue,...",black],[1159,71,"1,83...","#0000ff"],
  [86,374,"sjh_I_DynamicMAV_Hst 21_10_11 (2047,\"TS\",Close,Close,08,13,0.25,0.25,00,...",black],[504,374,"17.18","#ff0000"],[537,374,"0.00","#808080"],
  [86,552,"sjh_I_Who'sOnTop_22.01.17 (2047,\"TS\",Close,Goldenrod,Purple,05, TRUE,...",black],[495,552,"0.10","#daa520"],[522,552,"skt.Plot Equity (0, TRUE,FALSE,FALSE, TRUE,07, TRUE)",black],
  [86,629,"sjh_I_Pennants_21.07.07 ( 2047 , \"TS\" ,4,1,1,3,...",black]
];
for (const [x, y, s, c] of status) label(x, y, s, c, "bold");
```
